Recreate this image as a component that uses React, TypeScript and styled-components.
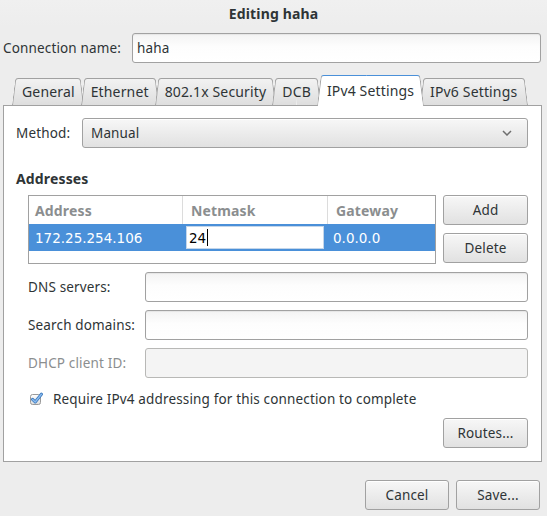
import styled, { createGlobalStyle } from "styled-components";

const GlobalStyle = createGlobalStyle`
  html, body {
    margin: 0;
    padding: 0;
    background: #ededed;
  }
  body {
    font-family: "Noto Sans", "DejaVu Sans", sans-serif;
    font-size: 13.5px;
    letter-spacing: 0.15px;
    color: #2e3436;
  }
  * {
    box-sizing: border-box;
  }
`;

const tabs = ["General", "Ethernet", "802.1x Security", "DCB", "IPv4 Settings", "IPv6 Settings"];
const activeTab = "IPv4 Settings";

function App(): JSX.Element {
  return (
    <Window>
      <GlobalStyle />
      <TitleBar>Editing haha</TitleBar>

      <NameRow>
        <NameLabel>Connection name:</NameLabel>
        <Entry $pad={4}>haha</Entry>
      </NameRow>

      <Notebook>
        <TabStrip>
          {tabs.map((t) => (
            <Tab key={t} $active={t === activeTab}>
              {t}
            </Tab>
          ))}
        </TabStrip>

        <Panel>
          <MethodRow>
            <MethodLabel>Method:</MethodLabel>
            <Select>
              <span>Manual</span>
              <svg width="10" height="6" viewBox="0 0 10 6">
                <path d="M1 1 L5 5 L9 1" fill="none" stroke="#6e6e6e" strokeWidth="1.5" />
              </svg>
            </Select>
          </MethodRow>

          <SectionTitle>Addresses</SectionTitle>

          <AddressBlock>
            <Table>
              <HeaderRow>
                <HeadCell $width={153}>Address</HeadCell>
                <HeadCell $width={145} $sep>
                  Netmask
                </HeadCell>
                <HeadCell $sep>Gateway</HeadCell>
              </HeaderRow>
              <SelectedRow>
                <Cell $width={153}>172.25.254.106</Cell>
                <EditCell $width={145}>
                  <CellEntry>
                    24
                    <Caret />
                  </CellEntry>
                </EditCell>
                <Cell>0.0.0.0</Cell>
              </SelectedRow>
            </Table>
            <ButtonColumn>
              <Button>Add</Button>
              <Button>Delete</Button>
            </ButtonColumn>
          </AddressBlock>

          <FormGrid>
            <FieldLabel>DNS servers:</FieldLabel>
            <Entry />
            <FieldLabel>Search domains:</FieldLabel>
            <Entry />
            <FieldLabel $disabled>DHCP client ID:</FieldLabel>
            <Entry $disabled />
          </FormGrid>

          <CheckRow>
            <svg width="14" height="14" viewBox="0 0 14 14">
              <defs>
                <linearGradient id="cb" x1="0" y1="0" x2="0" y2="1">
                  <stop offset="0" stopColor="#ffffff" />
                  <stop offset="1" stopColor="#dcdcdc" />
                </linearGradient>
              </defs>
              <rect x="1.5" y="2.5" width="10" height="10" rx="2" fill="url(#cb)" stroke="#9a9a9a" />
              <path d="M3.6 7.4 L6.2 10 L12.4 2.2" fill="none" stroke="#3a78bd" strokeWidth="3" strokeLinecap="round" strokeLinejoin="round" />
              <path d="M3.6 7.4 L6.2 10 L12.4 2.2" fill="none" stroke="#8bbcf0" strokeWidth="1.4" strokeLinecap="round" strokeLinejoin="round" />
            </svg>
            <span>Require IPv4 addressing for this connection to complete</span>
          </CheckRow>

          <RoutesRow>
            <Button>Routes...</Button>
          </RoutesRow>
        </Panel>
      </Notebook>

      <Footer>
        <Button $width={84}>Cancel</Button>
        <Button $width={84}>Save...</Button>
      </Footer>
    </Window>
  );
}

export default App;

const Window = styled.div`
  width: 547px;
  height: 516px;
  background: #ededed;
  display: flex;
  flex-direction: column;
  overflow: hidden;
`;

const TitleBar = styled.div`
  height: 27px;
  display: flex;
  align-items: center;
  justify-content: center;
  font-size: 14px;
  font-weight: 700;
  background: linear-gradient(#f0f0f0, #ededed);
`;

const NameRow = styled.div`
  display: flex;
  align-items: center;
  padding: 6px 6px 0 3px;
`;

const NameLabel = styled.div`
  width: 129px;
  white-space: nowrap;
`;

const Entry = styled.div<{ $disabled?: boolean; $pad?: number }>`
  flex: 1;
  height: 30px;
  display: flex;
  align-items: center;
  padding: 0 ${(p) => p.$pad ?? 7}px;
  border: 1px solid ${(p) => (p.$disabled ? "#b8b8b6" : "#a1a1a1")};
  border-radius: 3px;
  background: ${(p) => (p.$disabled ? "#f4f4f4" : "linear-gradient(#f3f3f3, #fdfdfd 45%, #ffffff)")};
  box-shadow: ${(p) => (p.$disabled ? "none" : "inset 0 1px 1px rgba(0, 0, 0, 0.06)")};
  color: #2e3436;
`;

const Notebook = styled.div`
  display: flex;
  flex-direction: column;
  margin: 12px 5px 0 3px;
`;

const TabStrip = styled.div`
  position: relative;
  z-index: 2;
  display: flex;
  align-items: flex-end;
  height: 31px;
  margin-bottom: -1px;
  padding-left: 13px;
`;

const Tab = styled.div<{ $active?: boolean }>`
  position: relative;
  z-index: ${(p) => (p.$active ? 3 : 1)};
  height: ${(p) => (p.$active ? 31 : 27)}px;
  margin-bottom: ${(p) => (p.$active ? 0 : 1)}px;
  margin-left: -4px;
  padding: 0 10px;
  display: flex;
  align-items: center;
  white-space: nowrap;
  font-size: 14px;
  color: #2e3436;

  &::before,
  &::after {
    content: "";
    position: absolute;
    top: 0;
    bottom: 0;
    z-index: -1;
    border: 1px solid #a1a1a1;
    border-bottom: none;
    border-top-color: ${(p) => (p.$active ? "#4a90d9" : "#a1a1a1")};
    background: ${(p) => (p.$active ? "#ffffff" : "linear-gradient(#f2f2f2, #dedede)")};
    transform-origin: bottom;
  }

  &::before {
    left: 0;
    right: 50%;
    border-right: none;
    border-top-left-radius: 3px;
    transform: skewX(-7deg);
  }

  &::after {
    left: 50%;
    right: 0;
    border-left: none;
    border-top-right-radius: 3px;
    transform: skewX(7deg);
  }
`;

const Panel = styled.div`
  position: relative;
  z-index: 1;
  display: flex;
  flex-direction: column;
  background: #ffffff;
  border: 1px solid #a1a1a1;
  padding: 12px 13px 13px 12px;
`;

const MethodRow = styled.div`
  display: flex;
  align-items: center;
`;

const MethodLabel = styled.div`
  width: 66px;
`;

const Select = styled.div`
  flex: 1;
  height: 30px;
  display: flex;
  align-items: center;
  justify-content: space-between;
  padding: 0 15px 0 8px;
  border: 1px solid #a1a1a1;
  border-radius: 3px;
  background: linear-gradient(#f7f7f7, #e1e1e1);
  box-shadow: inset 0 1px #ffffff;
`;

const SectionTitle = styled.div`
  font-weight: 700;
  font-size: 14px;
  line-height: 18px;
  margin: 22px 0 7px;
`;

const AddressBlock = styled.div`
  display: flex;
  gap: 7px;
  margin-left: 12px;
`;

const Table = styled.div`
  flex: 1;
  height: 69px;
  border: 1px solid #a1a1a1;
  background: #ffffff;
  display: flex;
  flex-direction: column;
`;

const HeaderRow = styled.div`
  display: flex;
  height: 28px;
`;

const HeadCell = styled.div<{ $width?: number; $sep?: boolean }>`
  ${(p) => (p.$width ? `width: ${p.$width}px;` : "flex: 1;")}
  display: flex;
  align-items: center;
  padding-left: ${(p) => (p.$sep ? 8 : 6)}px;
  font-size: 14px;
  font-weight: 700;
  color: #8b8e8f;
  border-left: ${(p) => (p.$sep ? "1px solid #dcdcdc" : "none")};
`;

const SelectedRow = styled.div`
  display: flex;
  height: 27px;
  background: #4a90d9;
  color: #ffffff;
`;

const Cell = styled.div<{ $width?: number }>`
  ${(p) => (p.$width ? `width: ${p.$width}px;` : "flex: 1;")}
  display: flex;
  align-items: center;
  padding-left: 6px;
  font-family: "DejaVu Sans", "Noto Sans", sans-serif;
  letter-spacing: 0;
`;

const EditCell = styled.div<{ $width: number }>`
  width: ${(p) => p.$width}px;
  padding: 2px 3px 2px 4px;
  display: flex;
`;

const CellEntry = styled.div`
  flex: 1;
  display: flex;
  align-items: center;
  padding-left: 2px;
  background: #ffffff;
  border: 1px solid #c4d6ea;
  color: #000000;
  font-family: "DejaVu Sans", "Noto Sans", sans-serif;
  letter-spacing: 0;
`;

const Caret = styled.span`
  display: inline-block;
  width: 1px;
  height: 17px;
  margin-left: 1px;
  background: #000000;
`;

const ButtonColumn = styled.div`
  width: 85px;
  display: flex;
  flex-direction: column;
  gap: 8px;
`;

const Button = styled.div<{ $width?: number }>`
  width: ${(p) => p.$width ?? 85}px;
  height: 30px;
  display: flex;
  align-items: center;
  justify-content: center;
  border: 1px solid #a1a1a1;
  border-radius: 3px;
  background: linear-gradient(#f7f7f7, #e1e1e1);
  box-shadow: inset 0 1px #ffffff;
  color: #2e3436;
`;

const FormGrid = styled.div`
  display: grid;
  grid-template-columns: 117px 1fr;
  row-gap: 8px;
  align-items: center;
  margin: 8px 0 0 12px;
`;

const FieldLabel = styled.div<{ $disabled?: boolean }>`
  color: ${(p) => (p.$disabled ? "#8b8e8f" : "#2e3436")};
`;

const CheckRow = styled.div`
  display: flex;
  align-items: center;
  gap: 10px;
  height: 14px;
  margin: 14px 0 0 13px;
`;

const RoutesRow = styled.div`
  display: flex;
  justify-content: flex-end;
  margin-top: 12px;
`;

const Footer = styled.div`
  display: flex;
  justify-content: flex-end;
  gap: 7px;
  margin-top: 18px;
  padding-right: 7px;
`;
